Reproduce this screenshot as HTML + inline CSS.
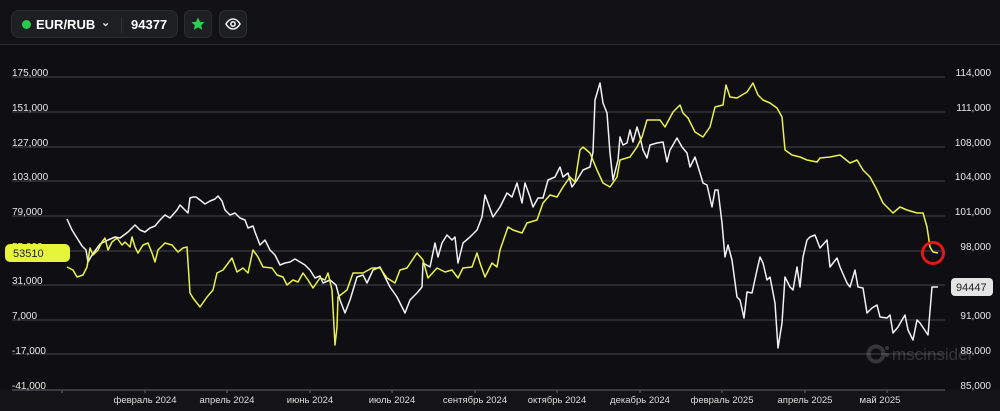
<!DOCTYPE html>
<html><head><meta charset="utf-8"><style>
html,body{margin:0;padding:0;background:#0f0f13;width:1000px;height:411px;overflow:hidden;font-family:"Liberation Sans",sans-serif}
.pill{position:absolute;left:11px;top:10px;width:167px;height:28px;background:#1e1f23;border:1px solid #2b2c31;border-radius:8px;box-sizing:border-box}
.btn{position:absolute;top:10px;width:28px;height:28px;background:#1e1f23;border:1px solid #2b2c31;border-radius:6px;box-sizing:border-box}
</style></head><body>
<div style="position:absolute;left:0;top:0;width:1000px;height:44px;background:#121216;border-bottom:1px solid #2a2a2f"></div>
<div class="pill">
<div style="position:absolute;left:10px;top:9px;width:9px;height:9px;border-radius:50%;background:#29c94a"></div>
<div style="position:absolute;left:24px;top:6px;color:#fff;font-weight:bold;font-size:13px">EUR/RUB</div>
<div style="position:absolute;left:89px;top:5px;color:#ddd;font-size:11px;font-weight:bold">⌄</div>
<div style="position:absolute;left:109px;top:6px;width:1px;height:16px;background:#333"></div>
<div style="position:absolute;left:119px;top:6px;color:#fff;font-weight:bold;font-size:13px">94377</div>
</div>
<div class="btn" style="left:184px"><svg width="26" height="26" viewBox="0 0 26 26"><path d="M13 6.5l2 4.2 4.6.5-3.4 3.1 1 4.5-4.2-2.4-4.2 2.4 1-4.5-3.4-3.1 4.6-.5z" fill="#2bd14f"/></svg></div>
<div class="btn" style="left:219px"><svg width="26" height="26" viewBox="0 0 26 26"><path d="M6 13c2-3.5 4.5-5 7-5s5 1.5 7 5c-2 3.5-4.5 5-7 5s-5-1.5-7-5z" fill="none" stroke="#eee" stroke-width="1.6"/><circle cx="13" cy="13" r="2.2" fill="none" stroke="#eee" stroke-width="1.6"/></svg></div>
<div style="position:absolute;left:0;top:390px;width:1000px;height:21px;background:#141418"></div>
<svg style="position:absolute;left:0;top:0" width="1000" height="411">
<g stroke="#3a3a40" stroke-width="1.2">
<line x1="12" y1="77" x2="945" y2="77"/><line x1="12" y1="112" x2="945" y2="112"/><line x1="12" y1="147" x2="945" y2="147"/><line x1="12" y1="181" x2="945" y2="181"/><line x1="12" y1="216" x2="945" y2="216"/><line x1="12" y1="251" x2="945" y2="251"/><line x1="12" y1="285" x2="945" y2="285"/><line x1="12" y1="320" x2="945" y2="320"/><line x1="12" y1="354" x2="945" y2="354"/>
<line x1="12" y1="390" x2="945" y2="390" stroke="#55555b"/>
</g>
<g stroke="#66666c" stroke-width="1"><line x1="62" y1="390" x2="62" y2="393"/><line x1="145" y1="390" x2="145" y2="393"/><line x1="227" y1="390" x2="227" y2="393"/><line x1="310" y1="390" x2="310" y2="393"/><line x1="392" y1="390" x2="392" y2="393"/><line x1="475" y1="390" x2="475" y2="393"/><line x1="557" y1="390" x2="557" y2="393"/><line x1="640" y1="390" x2="640" y2="393"/><line x1="722" y1="390" x2="722" y2="393"/><line x1="805" y1="390" x2="805" y2="393"/><line x1="887" y1="390" x2="887" y2="393"/></g>
<g font-size="10" fill="#e8e8e8" font-family="Liberation Sans,sans-serif">
<text x="12" y="76">175,000</text><text x="12" y="111">151,000</text><text x="12" y="146">127,000</text><text x="12" y="180">103,000</text><text x="12" y="215">79,000</text><text x="12" y="250">55,000</text><text x="12" y="284">31,000</text><text x="12" y="319">7,000</text><text x="12" y="354">-17,000</text><text x="12" y="389">-41,000</text>
<g text-anchor="end"><text x="991" y="76">114,000</text><text x="991" y="111">111,000</text><text x="991" y="146">108,000</text><text x="991" y="180">104,000</text><text x="991" y="215">101,000</text><text x="991" y="250">98,000</text><text x="991" y="319">91,000</text><text x="991" y="354">88,000</text><text x="991" y="389">85,000</text></g>
<g text-anchor="middle" font-size="9.5" fill="#ddd"><text x="145" y="403">февраль 2024</text><text x="227" y="403">апрель 2024</text><text x="310" y="403">июнь 2024</text><text x="392" y="403">июль 2024</text><text x="475" y="403">сентябрь 2024</text><text x="557" y="403">октябрь 2024</text><text x="640" y="403">декабрь 2024</text><text x="722" y="403">февраль 2025</text><text x="805" y="403">апрель 2025</text><text x="880" y="403">май 2025</text></g>
</g>
<g opacity="0.25" fill="#aaa"><circle cx="876" cy="354" r="7.5" fill="none" stroke="#aaa" stroke-width="4"/><circle cx="887" cy="348" r="2"/><circle cx="887" cy="355" r="2"/><text x="892" y="360" font-size="17" font-family="Liberation Sans,sans-serif">mscinsider</text></g>
<polyline fill="none" stroke="#f2f2f5" stroke-width="1.5" stroke-linejoin="round" points="67,219 72,230 77,238 82,246 86,250 88,262 92,255 100,244 108,240 115,237 120,238 128,232 135,225 140,230 145,232 150,228 155,226 160,220 165,215 170,218 177,210 180,205 185,210 188,213 190,198 193,197 196,197 200,200 205,204 210,201 215,199 218,196 222,201 225,210 230,215 235,213 240,218 245,220 248,228 253,226 255,232 260,245 265,240 270,250 275,255 280,265 285,263 290,262 295,259 300,262 305,265 310,270 315,278 320,276 323,283 330,280 336,285 340,300 345,313 350,300 357,277 363,275 367,283 373,270 380,267 383,273 390,287 397,297 405,313 410,300 417,293 422,287 423,263 430,267 435,243 438,257 442,243 447,235 452,240 455,237 458,263 463,243 470,237 477,230 482,217 485,195 488,203 493,217 500,207 507,193 512,197 517,183 522,203 525,183 530,197 533,207 538,198 543,198 548,180 555,177 560,167 563,177 568,173 572,187 577,180 583,170 590,167 593,152 595,100 600,83 603,103 607,113 610,153 613,180 618,160 620,137 623,145 627,143 630,130 633,142 637,127 640,137 643,150 647,158 650,145 657,143 663,142 667,162 670,150 677,138 682,147 687,153 690,167 695,157 700,173 703,183 707,185 712,207 715,190 718,190 722,223 725,257 728,245 732,260 737,297 740,300 744,318 747,292 752,293 757,270 760,257 763,263 767,280 770,277 775,303 778,348 782,323 785,277 790,287 793,290 797,267 800,287 803,257 807,240 810,237 815,235 820,248 827,240 830,267 837,258 840,267 847,283 850,287 855,270 858,287 863,288 867,313 872,308 877,305 880,317 887,318 890,315 893,333 898,327 902,320 905,315 908,330 913,340 917,320 920,323 928,335 932,287 938,287"/>
<polyline fill="none" stroke="#e9f24a" stroke-width="1.5" stroke-linejoin="round" points="67,267 73,270 77,277 83,275 87,267 90,248 93,255 98,250 102,242 105,238 108,250 112,242 117,238 122,245 125,242 130,247 132,237 135,247 138,253 143,245 148,243 152,253 155,262 158,250 165,243 172,245 178,252 183,248 187,247 190,293 193,298 200,307 207,297 213,290 217,273 223,270 232,258 237,272 243,268 248,273 253,250 258,257 263,267 272,268 277,275 283,277 287,285 293,280 298,282 303,273 308,280 313,288 320,278 325,280 328,273 332,290 335,345 337,327 338,297 347,290 353,273 363,273 372,268 380,268 387,278 395,283 400,270 407,268 417,253 423,260 428,278 437,268 445,272 452,270 458,278 463,268 472,267 477,253 480,263 485,277 492,263 497,267 500,250 508,227 513,230 522,233 527,223 537,220 543,203 550,195 557,197 563,187 570,177 575,182 580,150 583,147 590,153 597,170 603,183 610,187 617,177 620,160 630,157 637,147 642,137 647,120 660,120 665,127 673,112 680,105 683,113 688,118 695,132 703,137 710,127 715,107 723,105 726,85 730,97 737,98 742,95 747,92 753,83 758,95 763,100 770,103 777,108 782,117 785,150 792,155 800,157 807,160 817,162 820,158 830,157 840,155 850,163 857,160 863,170 870,177 877,190 883,203 893,213 900,207 907,210 917,213 923,213 927,227 930,247 933,252 938,253"/>
<circle cx="933" cy="253" r="10.5" fill="none" stroke="#e01818" stroke-width="3"/>
<rect x="5" y="244" width="65" height="18" rx="5" fill="#e6f53a"/>
<text x="13" y="257" font-size="11" fill="#222" font-family="Liberation Sans,sans-serif">53510</text>
<rect x="951" y="278" width="42" height="18" rx="4" fill="#e4e4e4"/>
<text x="956" y="291" font-size="11" fill="#222" font-family="Liberation Sans,sans-serif">94447</text>
</svg>
</body></html>
